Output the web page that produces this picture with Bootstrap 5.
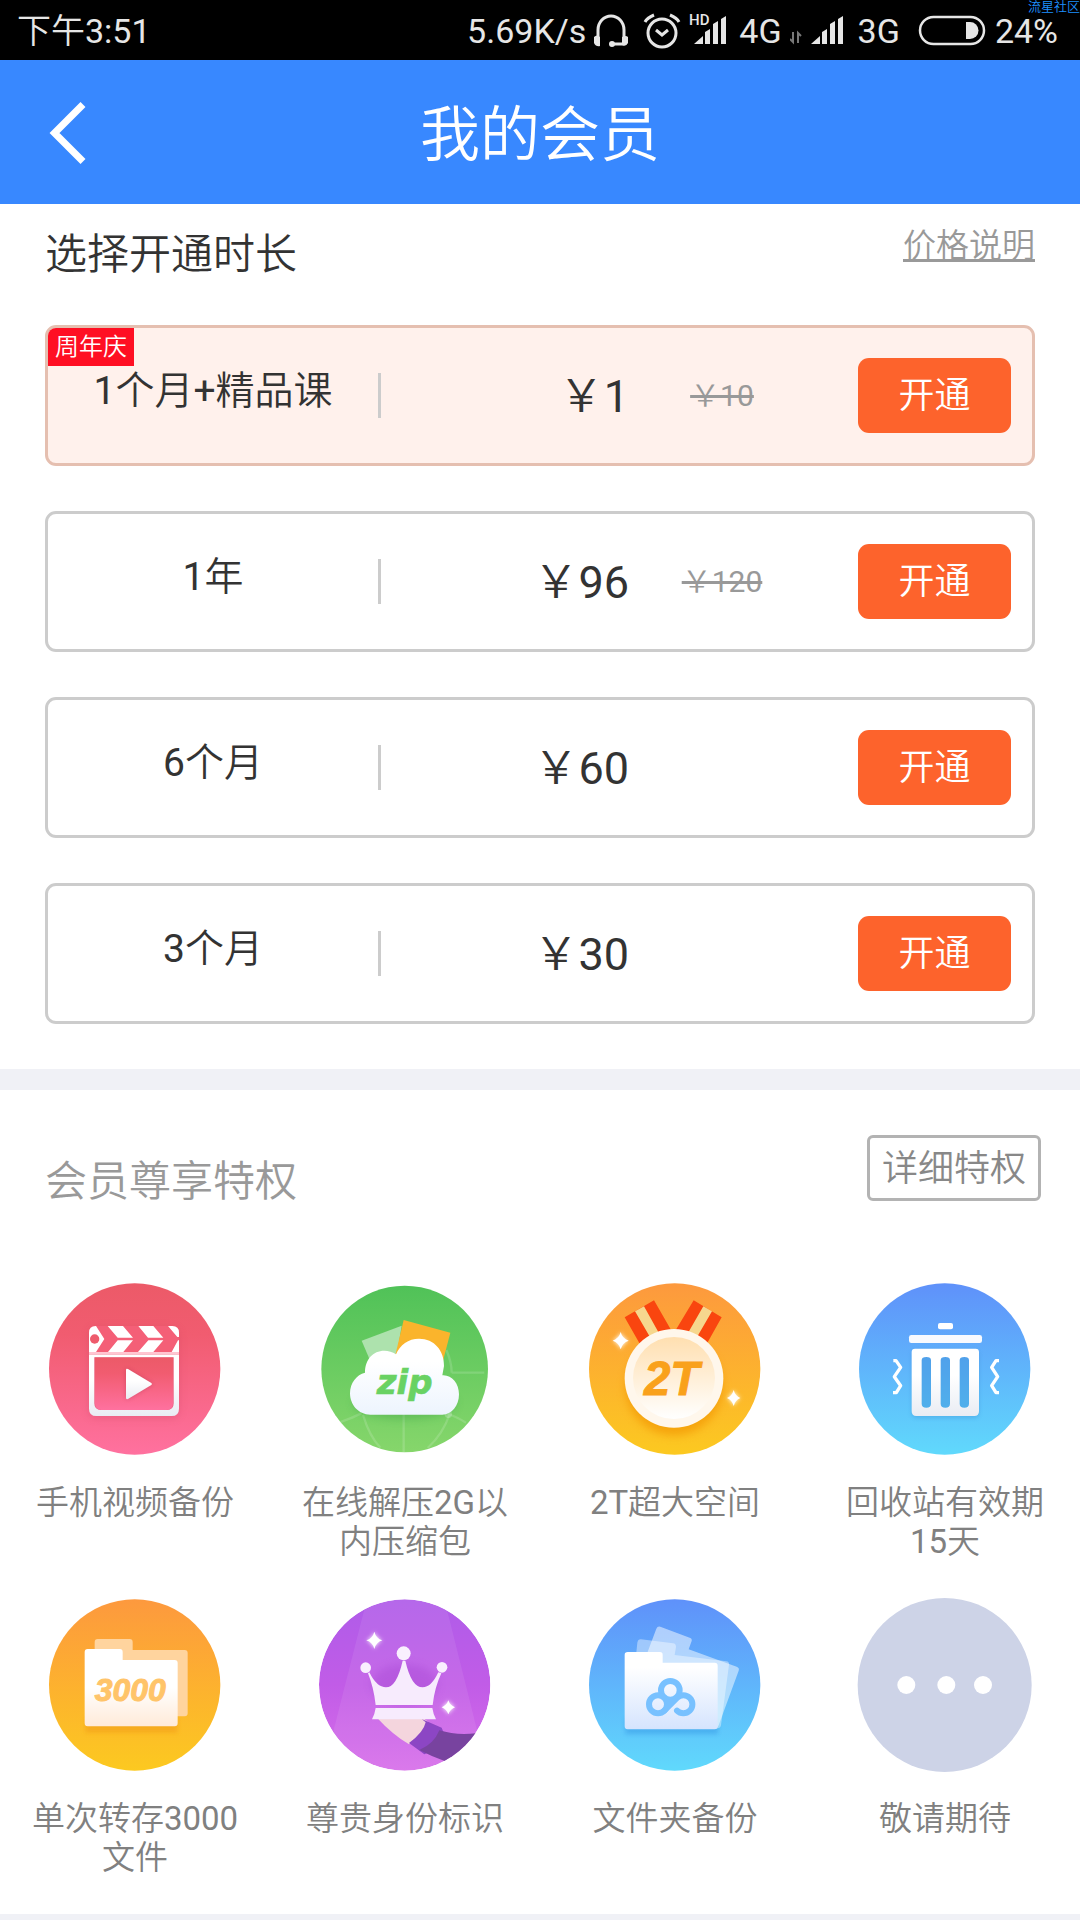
<!DOCTYPE html>
<html lang="zh-CN">
<head>
<meta charset="utf-8">
<meta name="viewport" content="width=device-width, initial-scale=1">
<title>我的会员</title>
<link href="https://cdn.jsdelivr.net/npm/bootstrap@5.3.0/dist/css/bootstrap.min.css" rel="stylesheet">
<style>
  body { background: #f0f1f6; color: #333; font-family: Roboto, "Noto Sans CJK SC DemiLight", "Noto Sans CJK SC", sans-serif; font-weight: 400; }
  svg { display: block; flex: none; }
  .status-bar { height: 60px; padding: 2px 22px 0 17px; background: #000; color: #e6e6e6; font-size: 34px; line-height: 34px; }
  .status-icons { gap: 8px; }
  .watermark { top: 0; right: 0; font-size: 13px; line-height: 13px; color: #1e90ff; }
  .app-bar { height: 144px; background: #3888ff; color: #fff; }
  .bar-side { width: 144px; height: 144px; padding: 0 0 0 45px; }
  .app-title { font-size: 60px; line-height: 90px; font-weight: 400; padding-top: 8px; }
  .plans { padding: 19px 45px 45px; }
  .section-title { font-size: 42px; line-height: 63px; font-weight: 400; }
  .price-link { font-size: 33px; line-height: 46px; color: #999; text-decoration: underline; text-decoration-thickness: 3px; text-underline-offset: 2px; text-decoration-skip-ink: none; }
  .plan-list { margin-top: 39px; gap: 45px; }
  .plan { display: grid; grid-template-columns: 330fr 3px 248fr 186fr auto; height: 141px; border: 3px solid #ccc; border-radius: 11px; align-items: center; }
  .plan-hot { background: #fff1ec; border-color: #e5bfb0; }
  .plan-name { font-size: 39px; line-height: 57px; padding-bottom: 9px; }
  .plan-rule { height: 45px; background: #ccc; }
  .plan-price { font-size: 45px; line-height: 63px; padding-top: 2px; }
  .plan-old { font-size: 30px; line-height: 45px; color: #999; text-decoration-thickness: 3px; }
  .plan-tag { top: 0; left: 0; padding: 0 7px; font-size: 24px; line-height: 38px; height: 38px; background: #ff0f23; color: #fff; border-top-left-radius: 8px; }
  .buy { --bs-btn-bg: #fd632c; --bs-btn-color: #fff; --bs-btn-hover-bg: #ec5520; --bs-btn-hover-color: #fff; width: 153px; height: 75px; margin: 0 21px 0 43px; padding: 0; border: 0; border-radius: 11px; font-size: 36px; line-height: 54px; }
  .perks { margin-top: 21px; padding: 45px 0 37px; }
  .perks-head { padding: 0 39px 0 45px; margin-bottom: 70px; }
  .perks-head .section-title { color: #999; margin-top: 15px; }
  .detail { --bs-btn-color: #888; --bs-btn-border-color: #b3b3b3; --bs-btn-hover-color: #666; height: 66px; padding: 2px 12px 0; border-width: 3px; border-radius: 6px; font-size: 36px; line-height: 54px; }
  .perk-grid { row-gap: 38px; }
  .perk { color: #808080; font-size: 33px; line-height: 39px; padding: 0 24px; min-height: 277px; }
  .perk svg { width: 172px; height: 172px; margin: 0 auto 28px; }
  .perk text { font-family: "Liberation Sans", sans-serif; font-weight: 700; font-style: italic; }
  .perk text.zip-text { font-family: "DejaVu Sans", sans-serif; }
</style>
<script src="https://cdn.jsdelivr.net/npm/bootstrap@5.3.0/dist/js/bootstrap.bundle.min.js"></script>
</head>
<body>
<div class="status-bar position-relative d-flex justify-content-between align-items-center">
  <span>下午3:51</span>
  <div class="status-icons d-flex align-items-center">
    <span>5.69K/s</span>
    <svg width="34" height="60" viewBox="0 0 34 60" fill="none" stroke="#e6e6e6" stroke-width="3"><path d="M4 37V29a13 14 0 0 1 26 0v8M18 43h12"/><path d="M0 36q3-3 6 0v9q-4 1-6-3zM28 36q4-2 6 0v6q-2 4-6 2z" fill="#e6e6e6" stroke="none"/><circle cx="18" cy="43" r="3" fill="#e6e6e6" stroke="none"/></svg>
    <svg width="45" height="60" viewBox="0 0 45 60" fill="none" stroke="#e6e6e6" stroke-width="3"><circle cx="26" cy="32" r="14"/><path d="M20 29l6 5 6-5M9 21q2-4 9-7M43 21q-2-4-9-7"/></svg>
    <svg width="42" height="60" viewBox="0 0 42 60" fill="#e6e6e6"><path d="M5 43l9-8v8zM16 31l5-3v15h-5zM24 23l5-3v23h-5zM32 18l5-3v28h-5z"/><text x="0" y="24" font-size="15" font-weight="500" font-family="Roboto">HD</text></svg>
    <span>4G</span>
    <svg width="60" height="60" viewBox="0 0 60 60" fill="#e6e6e6"><path d="M3 31v10l-3-3M8 42V32l3 3" fill="none" stroke="#777" stroke-width="2"/><path d="M21 43l9-8v8zM32 31l5-3v15h-5zM40 23l5-3v23h-5zM48 18l5-3v28h-5z"/></svg>
    <span>3G</span>
    <svg width="79" height="60" viewBox="0 0 79 60"><rect x="12" y="16" width="64" height="27" rx="13.5" fill="none" stroke="#e6e6e6" stroke-width="2.5"/><path d="M58 21h4a8.500 8.500 0 0 1 0 17h-4z" fill="#e6e6e6"/></svg>
    <span>24%</span>
  </div>
  <span class="watermark position-absolute">流星社区</span>
</div>

<header class="app-bar d-flex align-items-center">
  <button class="bar-side btn border-0" type="button" aria-label="返回"><svg width="50" height="70" viewBox="0 0 50 70" fill="none" stroke="#fff" stroke-width="7"><path d="M38 7.500 9.500 36 38 64.500"/></svg></button>
  <h1 class="app-title flex-grow-1 text-center m-0">我的会员</h1>
  <div class="bar-side"></div>
</header>

<main>
  <section class="plans bg-white">
    <div class="d-flex justify-content-between align-items-start">
      <h2 class="section-title m-0">选择开通时长</h2>
      <a class="price-link" href="#">价格说明</a>
    </div>
    <div class="plan-list d-flex flex-column">
      <div class="plan plan-hot position-relative">
        <span class="plan-tag position-absolute">周年庆</span>
        <div class="plan-name text-center">1个月+精品课</div><div class="plan-rule"></div>
        <div class="plan-price text-end">￥1</div>
        <div class="text-center"><del class="plan-old">￥10</del></div>
        <button class="buy btn" type="button">开通</button>
      </div>
      <div class="plan">
        <div class="plan-name text-center">1年</div><div class="plan-rule"></div>
        <div class="plan-price text-end">￥96</div>
        <div class="text-center"><del class="plan-old">￥120</del></div>
        <button class="buy btn" type="button">开通</button>
      </div>
      <div class="plan">
        <div class="plan-name text-center">6个月</div><div class="plan-rule"></div>
        <div class="plan-price text-end">￥60</div>
        <div></div>
        <button class="buy btn" type="button">开通</button>
      </div>
      <div class="plan">
        <div class="plan-name text-center">3个月</div><div class="plan-rule"></div>
        <div class="plan-price text-end">￥30</div>
        <div></div>
        <button class="buy btn" type="button">开通</button>
      </div>
    </div>
  </section>

  <section class="perks bg-white">
    <div class="perks-head d-flex justify-content-between align-items-start">
      <h2 class="section-title mb-0">会员尊享特权</h2>
      <button class="detail btn" type="button">详细特权</button>
    </div>
    <div class="perk-grid row g-0">
      <div class="perk col-3 text-center">
        <svg viewBox="88 69 516 516">
          <defs>
            <linearGradient id="pink" x1="0" y1="0" x2="0" y2="1"><stop offset="0" stop-color="#ec5a68"/><stop offset=".3" stop-color="#f15c70"/><stop offset="1" stop-color="#ff719f"/></linearGradient>
            <linearGradient id="green" x1="0" y1="0" x2="0" y2="1"><stop offset="0" stop-color="#50c258"/><stop offset="1" stop-color="#86d66b"/></linearGradient>
            <linearGradient id="orange" x1="0" y1="0" x2="0" y2="1"><stop offset="0" stop-color="#fd993e"/><stop offset="1" stop-color="#fcc920"/></linearGradient>
            <linearGradient id="blue" x1="0" y1="0" x2="0" y2="1"><stop offset="0" stop-color="#5f91fa"/><stop offset="1" stop-color="#60d9fc"/></linearGradient>
            <linearGradient id="purple" x1="0" y1="0" x2="0" y2="1"><stop offset="0" stop-color="#af5ce9"/><stop offset=".5" stop-color="#c15ce7"/><stop offset="1" stop-color="#d76eea"/></linearGradient>
            <linearGradient id="paper" x1="0" y1="0" x2="0" y2="1"><stop offset=".4" stop-color="#fff"/><stop offset="1" stop-color="#e9ecf3"/></linearGradient>
            <linearGradient id="warmPaper" x1="0" y1="0" x2="0" y2="1"><stop offset=".5" stop-color="#fff"/><stop offset="1" stop-color="#ffead8"/></linearGradient>
            <linearGradient id="coolPaper" x1="0" y1="0" x2="0" y2="1"><stop offset=".2" stop-color="#fff"/><stop offset="1" stop-color="#d5e4fe"/></linearGradient>
            <linearGradient id="cloud" x1="0" y1="0" x2="0" y2="1"><stop offset=".3" stop-color="#fff"/><stop offset="1" stop-color="#edf4fe"/></linearGradient>
            <linearGradient id="medal" x1="0" y1="0" x2="0" y2="1"><stop offset="0" stop-color="#ffdfb0"/><stop offset="1" stop-color="#fff"/></linearGradient>
            <filter id="soft" x="-30%" y="-30%" width="160%" height="160%"><feGaussianBlur stdDeviation="12"/></filter>
            <filter id="glow" x="-60%" y="-60%" width="220%" height="220%"><feGaussianBlur stdDeviation="6"/></filter>
            <clipPath id="clap"><path d="M208 276v-58q0-20 20-20h230q20 0 20 20v58z"/></clipPath>
          </defs>
          <circle cx="345" cy="327" r="257" fill="url(#pink)"/>
          <rect x="208" y="205" width="270" height="268" rx="20" fill="#b93352" opacity=".25" filter="url(#soft)"/>
          <g clip-path="url(#clap)"><path fill="#f45f77" d="M208 198h270v80H208z"/>
            <path fill="#fff" d="M208 190h16l30 47-30 47h-16zM264 198h46l30 35h-46zM356 198h45l30 35h-46zM445 198h33v33h-5zM294 241h46l-29 35h-46zM386 241h45l-30 35h-46zM475 241h3v35h-22z"/><circle cx="225" cy="237" r="14" fill="#ee5b6c"/></g>
          <path d="M208 276h270v8H208z" fill="#ffc5d1"/>
          <path fill-rule="evenodd" fill="url(#paper)" d="M208 284h270v162q0 22-22 22H230q-22 0-22-22zM224 292v138q0 20 20 20h198q20 0 20-20V292z"/>
          <path fill="url(#pink)" d="M226 293h234v137q0 20-20 20H246q-20 0-20-20z"/>
          <path d="M319 330q0-6 6-3l70 42q4 3 0 6l-70 42q-6 2-6-4z" fill="#9d2340" opacity=".35" filter="url(#glow)"/>
          <path d="M319 330q0-6 6-3l70 42q4 3 0 6l-70 42q-6 2-6-4z" fill="url(#paper)"/>
        </svg>手机视频备份
      </div>
      <div class="perk col-3 text-center">
        <svg viewBox="898 69 516 516">
          <circle cx="1155" cy="327" r="250" fill="url(#green)"/>
          <g fill="none" stroke="#fff" stroke-opacity=".15" stroke-width="7"><path d="M1152 460v116M1030 465q20 65 52 98M1290 462q-20 60-66 102M960 487q35-12 65-27M1285 462q25 8 54 26M1296 338h98M1280 270q16 36 16 68"/></g><circle cx="1286" cy="463" r="11" fill="#fff" opacity=".25"/>
          <ellipse cx="1155" cy="430" rx="155" ry="48" fill="#278c38" opacity=".3" filter="url(#soft)"/>
          <path fill="#ade2ad" d="M1026 242l120-45-18 110-70 10z"/><path fill="#fab42c" d="M1152 180l140 38-26 100-142-20z"/>
          <path fill="url(#cloud)" d="M1052 464c-36 0-61-30-61-64 0-31 20-56 45-62 0-40 24-66 58-66 12 0 25 4 35 11 12-29 37-47 69-47 46 0 76 36 75 82l-5 28c28-2 50 24 50 57 0 34-22 61-50 61z"/>
          <text class="zip-text" x="1155" y="403" font-size="102" text-anchor="middle" fill="#69d263" stroke="#69d263" stroke-width="2">zip</text>
        </svg>在线解压2G以内压缩包
      </div>
      <div class="perk col-3 text-center">
        <svg viewBox="88 69 516 516">
          <circle cx="345" cy="327" r="257" fill="url(#orange)"/>
          <path fill="#f9450f" d="M195 172l88-51 62 108-89 50zM486 172l-84-51-65 108 89 50z"/><path fill="#f6d78e" d="M226 154l27-15 60 108-26 12zM457 154l-26-15-62 108 27 12z"/>
          <circle cx="343" cy="380" r="146" fill="#f29400" opacity=".65" filter="url(#soft)"/>
          <circle cx="343" cy="355" r="148" fill="#fff7ec"/><circle cx="343" cy="354" r="123" fill="url(#medal)"/>
          <text x="336" y="405" font-size="142" text-anchor="middle" fill="#f9a11b" stroke="#f9a11b" stroke-width="3">2T</text>
          <path fill="#fff" filter="url(#glow)" d="M183 216q5 20 24 26-19 6-24 26-5-20-24-26 19-6 24-26z"/><path fill="#fff" d="M183 216q5 20 24 26-19 6-24 26-5-20-24-26 19-6 24-26zM522 390q5 18 20 24-15 6-20 24-5-18-20-24 15-6 20-24z"/><path fill="#fff" filter="url(#glow)" d="M522 390q5 18 20 24-15 6-20 24-5-18-20-24 15-6 20-24z"/>
        </svg>2T超大空间
      </div>
      <div class="perk col-3 text-center">
        <svg viewBox="898 69 516 516">
          <circle cx="1155" cy="327" r="257" fill="url(#blue)"/>
          <rect x="1056" y="270" width="202" height="204" rx="14" fill="#2e7fc8" opacity=".3" filter="url(#glow)"/>
          <rect x="1135" y="189" width="45" height="19" rx="6" fill="#fff"/><rect x="1048" y="225" width="219" height="24" rx="7" fill="#f8fafe"/>
          <path fill-rule="evenodd" fill="url(#paper)" d="M1066 266h182q10 0 10 10v178q0 14-14 14h-174q-14 0-14-14V276q0-10 10-10zM1100 291q-14 0-14 10v130q0 12 14 12t14-12V301q0-10-14-10zM1157 291q-14 0-14 10v130q0 12 14 12t14-12V301q0-10-14-10zM1214 291q-14 0-14 10v130q0 12 14 12t14-12V301q0-10-14-10z"/>
          <path fill="none" stroke="#fff" stroke-width="10" stroke-linejoin="round" d="M1001 302h8l14 20-19 28 19 27-13 21h-10M1318 302h-9l-13 20 18 28-18 27 13 21h9"/>
        </svg>回收站有效期15天
      </div>
      <div class="perk col-3 text-center">
        <svg viewBox="88 84 516 516">
          <circle cx="345" cy="342" r="257" fill="url(#orange)"/>
          <path fill="#ffd49e" d="M234 204h96q9 0 9 10v23h156q9 0 9 9v181q0 9-9 9H225V214q0-10 9-10z"/>
          <path fill="#f29c18" opacity=".55" filter="url(#glow)" d="M197 440h276v45H197z"/>
          <path fill="url(#warmPaper)" d="M204 234h97q8 0 8 9v24h156q9 0 9 9v180q0 10-9 10H204q-9 0-9-10V243q0-9 9-9z"/>
          <text x="332" y="391" font-size="96" text-anchor="middle" fill="#ffc469" stroke="#ffc469" stroke-width="3">3000</text>
        </svg>单次转存3000文件
      </div>
      <div class="perk col-3 text-center">
        <svg viewBox="898 84 516 516">
          <clipPath id="disc"><circle cx="1155" cy="342" r="257"/></clipPath>
          <g clip-path="url(#disc)"><circle cx="1155" cy="342" r="257" fill="url(#purple)"/>
          <path fill="#fff" opacity=".08" d="M1042 84h232l110 440-100 76H960l-24-100z"/>
          <path fill="#f4d5dd" d="M1072 440h138l16 14q-14 44-58 66-50-30-96-80z"/>
          <path fill="#8c46c4" d="M1206 444l60 26 20 50-72 30-46-34q44-32 50-62z"/><path fill="#78439f" d="M1259 478q50 16 110 9l50-4-30 120-116-34q-40-14-74-32 44-18 60-59z"/></g>
          <ellipse cx="1155" cy="340" rx="100" ry="60" fill="#8f2fc4" opacity=".25" filter="url(#soft)"/>
          <path fill="#f7ebfd" d="M1049 304q22 45 50 45 32 0 50-80h8q18 80 52 80 26 0 47-45l9 3q-20 42-26 95h-171q-6-53-23-95zM1068 411h170q3 20 11 34h-192q8-14 11-34z"/>
          <circle cx="1152" cy="247" r="21" fill="#f9effe"/><circle cx="1038" cy="290" r="16" fill="#f9effe"/><circle cx="1267" cy="289" r="16" fill="#f9effe"/>
          <g fill="#fff"><path filter="url(#glow)" d="M1064 182q5 20 24 26-19 6-24 26-5-20-24-26 19-6 24-26zM1286 388q5 15 20 21-15 6-20 21-5-15-20-21 15-6 20-21z"/><path d="M1064 182q5 20 24 26-19 6-24 26-5-20-24-26 19-6 24-26zM1286 388q5 15 20 21-15 6-20 21-5-15-20-21 15-6 20-21z"/></g>
        </svg>尊贵身份标识
      </div>
      <div class="perk col-3 text-center">
        <svg viewBox="88 84 516 516">
          <circle cx="345" cy="342" r="257" fill="url(#blue)"/>
          <path fill="#2c8fe0" opacity=".4" filter="url(#glow)" d="M197 440h278v50H197z"/>
          <path fill="#fff" opacity=".5" d="M302 167l88 33q8 3 6 10l-9 25 144 52q9 3 6 12l-60 164q-4 10-12 10l-220-180 45-120q4-9 12-6z"/>
          <path fill="#fff" opacity=".4" d="M244 205l96 12q9 1 9 11l-4 24 155 19q9 1 8 10l-24 182q-2 10-14 10l-242-210 5-48q2-11 11-10z"/>
          <path fill="url(#coolPaper)" d="M204 243h97q8 0 8 8v24h156q9 0 9 9v182q0 9-9 9H204q-9 0-9-9V251q0-8 9-8z"/>
          <g fill="none" stroke="#78c1ff" stroke-width="18" stroke-linecap="round"><circle cx="332" cy="358" r="28"/><circle cx="295" cy="400" r="27"/><path d="M314 419l38-38a27 27 0 1 1 0 38"/></g>
        </svg>文件夹备份
      </div>
      <div class="perk col-3 text-center">
        <svg viewBox="898 84 516 516" overflow="visible"><circle cx="1155" cy="342" r="261" fill="#cdd3e7"/><g fill="#fff"><circle cx="1040" cy="342" r="27"/><circle cx="1160" cy="342" r="27"/><circle cx="1270" cy="342" r="27"/></g></svg>敬请期待
      </div>
    </div>
  </section>
</main>
</body>
</html>
